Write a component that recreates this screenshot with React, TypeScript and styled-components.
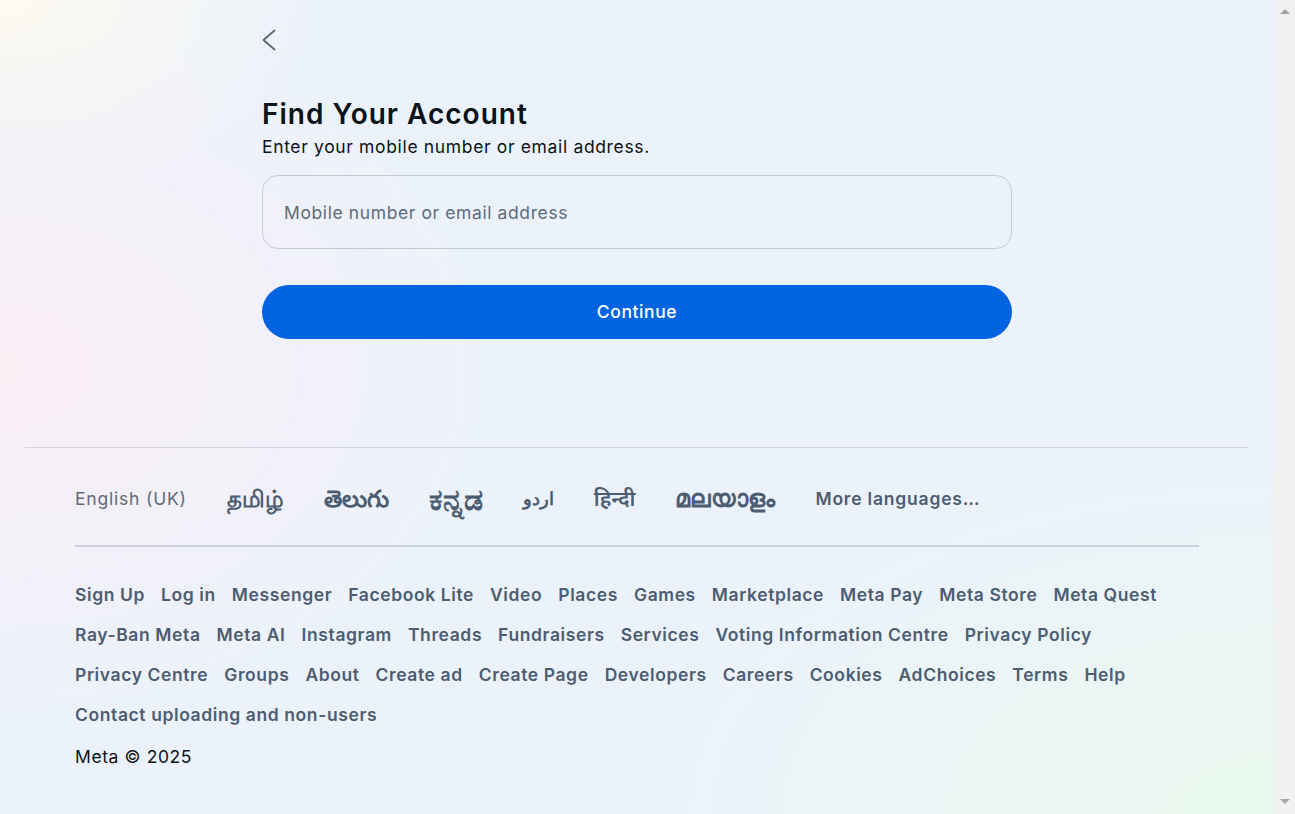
import { createGlobalStyle, styled } from 'styled-components'

const GlobalStyle = createGlobalStyle`
  body {
    margin: 0;
    font-family: Inter, 'Noto Sans', sans-serif;
    color: #1c2b33;
  }
`

const texts = {
  title: 'Find Your Account',
  subtitle: 'Enter your mobile number or email address.',
  placeholder: 'Mobile number or email address',
  continue: 'Continue',
  copyright: 'Meta © 2025'
}

const languages = [
  { label: 'English (UK)', size: 17.5, current: true },
  { label: 'தமிழ்', size: 23 },
  { label: 'తెలుగు', size: 23.5 },
  { label: 'ಕನ್ನಡ', size: 30 },
  { label: 'اردو', size: 18 },
  { label: 'हिन्दी', size: 21 },
  { label: 'മലയാളം', size: 24 },
  { label: 'More languages…', size: 17.5 }
]

const links = [
  'Sign Up', 'Log in', 'Messenger', 'Facebook Lite', 'Video', 'Places', 'Games',
  'Marketplace', 'Meta Pay', 'Meta Store', 'Meta Quest', 'Ray-Ban Meta', 'Meta AI',
  'Instagram', 'Threads', 'Fundraisers', 'Services', 'Voting Information Centre',
  'Privacy Policy', 'Privacy Centre', 'Groups', 'About', 'Create ad', 'Create Page',
  'Developers', 'Careers', 'Cookies', 'AdChoices', 'Terms', 'Help',
  'Contact uploading and non-users'
]

const BackIcon = () => (
  <svg width="16" height="24" viewBox="0 0 16 24" fill="none">
    <path
      d="M12.5 2.5 L1.5 12 L12.5 21.5"
      stroke="#5d6c7b"
      strokeWidth="2"
      strokeLinecap="round"
      strokeLinejoin="round"
    />
  </svg>
)

export default function App() {
  return (
    <Page>
      <GlobalStyle />
      <Content>
        <Main>
          <BackButton aria-label="Back">
            <BackIcon />
          </BackButton>
          <Title>{texts.title}</Title>
          <Subtitle>{texts.subtitle}</Subtitle>
          <Field type="text" placeholder={texts.placeholder} />
          <PrimaryButton>{texts.continue}</PrimaryButton>
        </Main>
        <Footer>
          <LangRow>
            {languages.map((l) => (
              <Lang
                key={l.label}
                $current={l.current}
                $size={l.size}>
                {l.label}
              </Lang>
            ))}
          </LangRow>
          <LinkList>
            {links.map((l) => (
              <FooterLink key={l}>{l}</FooterLink>
            ))}
          </LinkList>
          <Copyright>{texts.copyright}</Copyright>
        </Footer>
      </Content>
      <ScrollTrack>
        <Arrow $dir="up" />
        <Arrow $dir="down" />
      </ScrollTrack>
    </Page>
  )
}

const Page = styled.div`
  display: flex;
  min-height: 100vh;
`

const Content = styled.div`
  flex: 1;
  min-width: 0;
  background:
    radial-gradient(ellipse 700px 500px at 0% 45%, rgba(252, 238, 244, 0.9), rgba(252, 238, 244, 0) 70%),
    radial-gradient(ellipse 400px 250px at 0% 0%, rgba(253, 250, 240, 1), rgba(253, 250, 240, 0) 80%),
    radial-gradient(ellipse 800px 450px at 100% 100%, rgba(233, 249, 238, 1), rgba(233, 249, 238, 0) 80%),
    #ecf2fb;
  display: flex;
  flex-direction: column;
`

const ScrollTrack = styled.div`
  width: 21px;
  flex-shrink: 0;
  background: #f1f1f1;
  display: flex;
  flex-direction: column;
  justify-content: space-between;
  align-items: center;
  padding: 9px 0 10px;
  box-sizing: border-box;
`

const Arrow = styled.span<{ $dir: 'up' | 'down' }>`
  width: 0;
  height: 0;
  border-left: 5px solid transparent;
  border-right: 5px solid transparent;
  ${(p) =>
    p.$dir === 'up'
      ? 'border-bottom: 5px solid #a3a3a3;'
      : 'border-top: 5px solid #a3a3a3;'}
`

const Main = styled.main`
  width: 750px;
  margin: 0 auto;
  padding-top: 28px;
  display: flex;
  flex-direction: column;
`

const BackButton = styled.button`
  all: unset;
  width: 16px;
  height: 24px;
  cursor: pointer;
`

const Title = styled.h1`
  margin: 44px 0 0;
  font-size: 28px;
  font-weight: 600;
  line-height: 36px;
  color: #0a1317;
  letter-spacing: 1px;
`

const Subtitle = styled.p`
  margin: 4px 0 0;
  font-size: 17.5px;
  line-height: 22px;
  letter-spacing: 0.65px;
  color: #0a1317;
`

const Field = styled.input`
  margin-top: 17px;
  height: 74px;
  box-sizing: border-box;
  border: 1px solid #c6cbdc;
  border-radius: 16px;
  background: transparent;
  padding: 0 21px;
  font-family: inherit;
  font-size: 17.5px;
  letter-spacing: 0.6px;
  color: #1c2b33;
  outline: none;
  &::placeholder {
    color: #5d6c7b;
  }
`

const PrimaryButton = styled.button`
  all: unset;
  margin-top: 36px;
  height: 54px;
  border-radius: 27px;
  background: #0064e0;
  color: #fff;
  font-size: 17.5px;
  font-weight: 500;
  letter-spacing: 0.6px;
  text-align: center;
  line-height: 54px;
  cursor: pointer;
`

const Footer = styled.footer`
  margin: 108px 25px 0;
  border-top: 1px solid #d2d6e0;
  padding: 0 50px 30px;
  display: flex;
  flex-direction: column;
`

const LangRow = styled.div`
  display: flex;
  gap: 40px;
  align-items: center;
  height: 93px;
  padding-top: 4px;
  border-bottom: 2px solid #cbd1dc;
`

const Lang = styled.a<{ $current?: boolean; $size: number }>`
  font-size: ${(p) => p.$size}px;
  line-height: 30px;
  font-weight: ${(p) => (p.$current ? 400 : 600)};
  letter-spacing: ${(p) => (p.$size === 17.5 ? '0.8px' : '0')};
  color: ${(p) => (p.$current ? '#5d6c7b' : '#4d5d71')};
  cursor: pointer;
  white-space: nowrap;
`

const LinkList = styled.div`
  display: flex;
  flex-wrap: wrap;
  column-gap: 16px;
  padding-top: 28px;
`

const FooterLink = styled.a`
  font-size: 17.5px;
  font-weight: 600;
  line-height: 40px;
  letter-spacing: 0.6px;
  color: #4d5d71;
  cursor: pointer;
  white-space: nowrap;
`

const Copyright = styled.div`
  margin-top: 2px;
  font-size: 17.5px;
  line-height: 40px;
  letter-spacing: 0.6px;
  color: #0a1317;
`
